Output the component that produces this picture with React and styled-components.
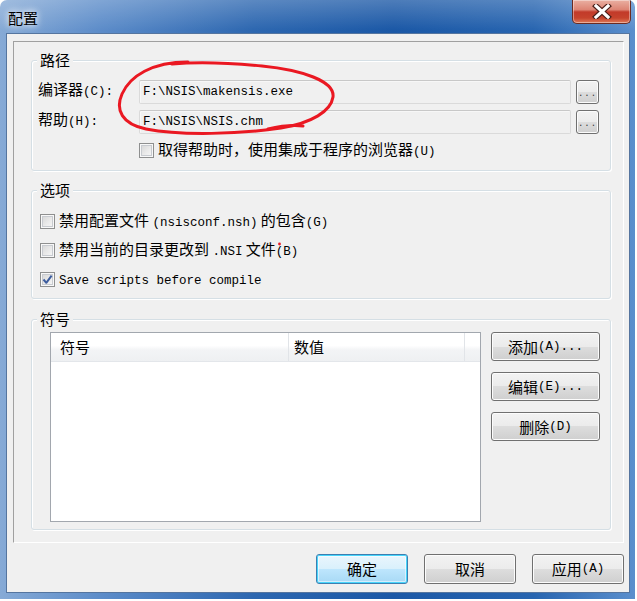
import React from "react";
import styled, { createGlobalStyle } from "styled-components";

const GlobalStyle = createGlobalStyle`
  * { box-sizing: border-box; }
  body {
    margin: 0;
    background: #fff;
    font-family: "Noto Sans CJK SC", "Liberation Sans", sans-serif;
    font-size: 15px;
    color: #000;
  }
`;

const Window = styled.div`
  position: relative;
  width: 635px;
  height: 599px;
  display: flex;
  flex-direction: column;
  border-radius: 7px 7px 0 0;
  overflow: hidden;
  background:
    linear-gradient(180deg, rgba(255, 255, 255, 0.22) 0px, rgba(255, 255, 255, 0) 30px),
    linear-gradient(90deg, #86aad6 0%, #5c8cc9 16%, #2d67b0 40%, #1b58a6 62%, #2865b0 84%, #5b8fcd 100%);
`;

const TitleBar = styled.div`
  height: 33px;
  flex: none;
  display: flex;
  align-items: flex-start;
  padding-left: 8px;
`;

const Title = styled.span`
  margin-top: 9px;
  font-size: 15px;
  line-height: 18px;
  color: #000;
  text-shadow: 0 0 6px rgba(255, 255, 255, 0.95), 0 0 10px rgba(255, 255, 255, 0.8);
`;

const CloseButton = styled.div`
  margin-left: auto;
  margin-right: 4px;
  width: 59px;
  height: 24px;
  display: flex;
  align-items: center;
  justify-content: center;
  border: 1px solid #6b2b22;
  border-top: none;
  border-radius: 0 0 5px 5px;
  background: linear-gradient(180deg, #eab0a2 0%, #dd8474 42%, #c23a29 52%, #c6432c 78%, #df7a58 100%);
  box-shadow: inset 0 0 0 1px rgba(255, 255, 255, 0.4);
`;

const Client = styled.div`
  flex: 1;
  margin: 0 5px 6px 6px;
  background: #f0f0f0;
  border: 1px solid #55759f;
  display: flex;
  flex-direction: column;
  padding: 7px 5px 0 6px;
`;

const Panel = styled.div`
  border: 1px solid;
  border-color: #a0a0a0 #fff #fff #a0a0a0;
  padding: 9px 12px 12px 17px;
  display: flex;
  flex-direction: column;
  gap: 10px;
`;

const Group = styled.fieldset`
  margin: 0;
  margin-top: ${p => p.$top || 0}px;
  padding: 0;
  min-width: 0;
  border: 1px solid #d5dfe5;
  border-radius: 3px;
  box-shadow: 1px 1px 0 #fff, inset 1px 1px 0 #fff;
`;

const Legend = styled.legend`
  margin-left: 5px;
  padding: 0 3px;
  height: 18px;
  font-size: 15px;
  line-height: 18px;
  background: #f0f0f0;
`;

const GroupBody = styled.div`
  padding: ${p => p.$pad};
`;

const Mono = styled.span`
  font-family: "Liberation Mono", "DejaVu Sans Mono", monospace;
  font-size: 12.5px;
`;

const PathGrid = styled.div`
  display: grid;
  grid-template-columns: 96px 432px 23px;
  grid-template-rows: 24px 24px 20px;
  column-gap: 5px;
  row-gap: 6px;
`;

const FieldLabel = styled.span`
  align-self: start;
  line-height: 17px;
  white-space: nowrap;
`;

const PathField = styled.div`
  height: 24px;
  border: 1px solid #dadada;
  border-top-color: #c8c8c8;
  border-radius: 2px;
  background: #f0f0f0;
  box-shadow: inset 1px 1px 0 #f7f7f7;
  padding-left: 3px;
  font-family: "Liberation Mono", "DejaVu Sans Mono", monospace;
  font-size: 12.5px;
  line-height: 22px;
  white-space: nowrap;
`;

const Button = styled.div`
  width: ${p => p.$w}px;
  height: ${p => p.$h}px;
  display: flex;
  align-items: center;
  justify-content: center;
  border: 1px solid ${p => (p.$primary ? "#3c7fb1" : "#707070")};
  border-radius: 3px;
  background: ${p =>
    p.$primary
      ? "linear-gradient(180deg, #eaf6fd 0%, #d9f0fc 50%, #bee6fd 50%, #a7d9f5 100%)"
      : "linear-gradient(180deg, #f2f2f2 0%, #ebebeb 50%, #dddddd 50%, #cfcfcf 100%)"};
  box-shadow: ${p =>
    p.$primary ? "inset 0 0 0 1px #48d5fb, inset 0 0 0 2px rgba(255,255,255,0.5)" : "inset 0 0 0 1px #fcfcfc"};
  font-size: 15px;
  line-height: 18px;
  white-space: nowrap;
`;

const DotsButton = styled(Button)`
  align-items: flex-end;
  padding-bottom: 4px;
  font-family: "Liberation Mono", monospace;
  font-size: 9px;
  line-height: 10px;
  letter-spacing: 1px;
  color: #333;
`;

const CheckRow = styled.label`
  display: flex;
  align-items: center;
  gap: 4px;
  height: ${p => p.$h || 29}px;
  line-height: 18px;
  white-space: nowrap;
  grid-column: ${p => p.$col || "auto"};
`;

const Box = styled.span`
  flex: none;
  width: 15px;
  height: 15px;
  display: flex;
  align-items: center;
  justify-content: center;
  border: 1px solid #8e8f8f;
  background: linear-gradient(135deg, #d3d3d3 0%, #eaeaea 55%, #fafafa 100%);
  box-shadow: inset 0 0 0 1px #f8f8f8, inset 0 0 0 2px #c8cbd0;
`;

const SymbolRow = styled.div`
  display: flex;
  gap: 10px;
`;

const List = styled.div`
  width: 431px;
  height: 190px;
  border: 1px solid #a2a7ae;
  background: #fff;
  display: flex;
  flex-direction: column;
`;

const ListHeader = styled.div`
  height: 29px;
  display: flex;
  background: linear-gradient(180deg, #ffffff 0%, #ffffff 45%, #f3f4f6 60%, #eef0f2 100%);
  border-bottom: 1px solid #e3e6ea;
`;

const HeaderCell = styled.div`
  width: ${p => (p.$w ? `${p.$w}px` : "auto")};
  flex: ${p => (p.$w ? "none" : 1)};
  padding-left: ${p => p.$pl || 0}px;
  border-right: ${p => (p.$last ? "none" : "1px solid #e1e4e8")};
  line-height: 28px;
`;

const SideButtons = styled.div`
  display: flex;
  flex-direction: column;
  gap: 11px;
`;

const Footer = styled.div`
  flex: 1;
  display: flex;
  justify-content: flex-end;
  align-items: flex-start;
  padding-top: 11px;
  gap: 16px;
`;

const Annotation = styled.svg`
  position: absolute;
  left: 0;
  top: 0;
  pointer-events: none;
`;

const Tick = () => (
  <svg width="11" height="11" viewBox="0 0 11 11">
    <path d="M1.5 5.5 L4.3 8.8 L9.6 1.6" fill="none" stroke="#3d5d9e" strokeWidth="2" strokeLinejoin="round" />
  </svg>
);

const Check = ({ checked, children, h, col }) => (
  <CheckRow $h={h} $col={col}>
    <Box>{checked && <Tick />}</Box>
    <span>{children}</span>
  </CheckRow>
);

export default function App() {
  return (
    <>
      <GlobalStyle />
      <Window>
        <TitleBar>
          <Title>配置</Title>
          <CloseButton>
            <svg width="20" height="15" viewBox="0 0 20 15">
              <path d="M4 2 L16 13 M16 2 L4 13" stroke="#4a1e18" strokeWidth="5.5" strokeLinecap="square" />
              <path d="M4 2 L16 13 M16 2 L4 13" stroke="#fff" strokeWidth="3.2" strokeLinecap="square" />
            </svg>
          </CloseButton>
        </TitleBar>
        <Client>
          <Panel>
            <Group>
              <Legend>路径</Legend>
              <GroupBody $pad="11px 11px 10px 6px">
                <PathGrid>
                  <FieldLabel>编译器<Mono>(C):</Mono></FieldLabel>
                  <PathField>F:\NSIS\makensis.exe</PathField>
                  <DotsButton $w={23} $h={24}>...</DotsButton>
                  <FieldLabel>帮助<Mono>(H):</Mono></FieldLabel>
                  <PathField>F:\NSIS\NSIS.chm</PathField>
                  <DotsButton $w={23} $h={24}>...</DotsButton>
                  <Check h={20} col="2 / span 2">
                    取得帮助时，使用集成于程序的浏览器<Mono>(U)</Mono>
                  </Check>
                </PathGrid>
              </GroupBody>
            </Group>

            <Group>
              <Legend>选项</Legend>
              <GroupBody $pad="8px 0 4px 8px">
                <Check>
                  禁用配置文件 <Mono>(nsisconf.nsh)</Mono> 的包含<Mono>(G)</Mono>
                </Check>
                <Check>
                  禁用当前的目录更改到 <Mono>.NSI</Mono> 文件<Mono>(B)</Mono>
                </Check>
                <Check checked>
                  <Mono>Save scripts before compile</Mono>
                </Check>
              </GroupBody>
            </Group>

            <Group $top={1}>
              <Legend>符号</Legend>
              <GroupBody $pad="4px 10px 7px 18px">
                <SymbolRow>
                  <List>
                    <ListHeader>
                      <HeaderCell $w={238} $pl={9}>符号</HeaderCell>
                      <HeaderCell $w={176} $pl={5}>数值</HeaderCell>
                      <HeaderCell $last />
                    </ListHeader>
                  </List>
                  <SideButtons>
                    <Button $w={109} $h={29}>添加<Mono>(A)...</Mono></Button>
                    <Button $w={109} $h={29}>编辑<Mono>(E)...</Mono></Button>
                    <Button $w={109} $h={29}>删除<Mono>(D)</Mono></Button>
                  </SideButtons>
                </SymbolRow>
              </GroupBody>
            </Group>
          </Panel>

          <Footer>
            <Button $w={92} $h={30} $primary>确定</Button>
            <Button $w={92} $h={30}>取消</Button>
            <Button $w={92} $h={30}>应用<Mono>(A)</Mono></Button>
          </Footer>
        </Client>

        <Annotation width="635" height="599" viewBox="0 0 635 599">
          <path
            d="M188 62 C152 62 130 76 122 94 C115 110 122 124 146 129 C182 136 240 134 281 128 C312 123 331 111 333 97 C335 81 302 70 262 66 C232 63 204 61 172 64"
            fill="none"
            stroke="#ea1822"
            strokeWidth="3"
            strokeLinecap="round"
          />
          <path d="M268 129 C281 126 293 125 303 126" fill="none" stroke="#ea1822" strokeWidth="3" strokeLinecap="round" />
          <circle cx="279.5" cy="244" r="1.4" fill="#ea1822" />
        </Annotation>
      </Window>
    </>
  );
}
